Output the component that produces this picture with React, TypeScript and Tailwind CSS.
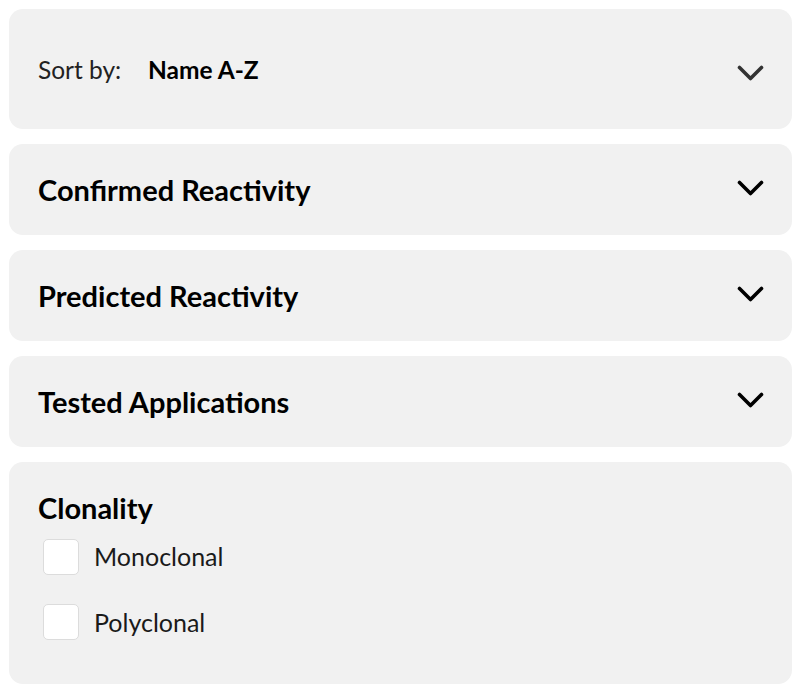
const font = { fontFamily: "Lato, 'Open Sans', sans-serif" };

function Chevron({ className }: { className: string }) {
  return (
    <svg width="27" height="17" viewBox="0 0 27 17" fill="none" className={className}>
      <polyline points="2.5,2.5 13.5,13.5 24.5,2.5" stroke="currentColor" strokeWidth="3.6" strokeLinecap="round" strokeLinejoin="round" />
    </svg>
  );
}

function Section({ title }: { title: string }) {
  return (
    <div className="h-[91px] rounded-[14px] bg-[#f1f1f1] pl-[29px] pr-[28px] flex items-center justify-between">
      <span className="text-[29px] font-bold text-black mt-[1px]">{title}</span>
      <Chevron className="text-black -mt-[3px]" />
    </div>
  );
}

function Check({ label }: { label: string }) {
  return (
    <label className="flex items-center gap-[15px]">
      <span className="w-[36px] h-[36px] rounded-[5px] bg-white border border-[#dcdcdc]" />
      <span className="text-[25px] text-[#1a1a1a]">{label}</span>
    </label>
  );
}

export default function App() {
  return (
    <div className="bg-white p-[9px] flex flex-col gap-[15px]" style={font}>
      {/* Sort */}
      <div className="h-[120px] rounded-[14px] bg-[#f1f1f1] pl-[29px] pr-[28px] flex items-center justify-between">
        <div className="flex items-center mt-[3px]">
          <span className="text-[24.5px] text-[#222] w-[110px]">Sort by:</span>
          <span className="text-[24.5px] font-bold text-black">Name A-Z</span>
        </div>
        <Chevron className="text-[#333] mt-[9px]" />
      </div>

      <Section title="Confirmed Reactivity" />
      <Section title="Predicted Reactivity" />
      <Section title="Tested Applications" />

      {/* Clonality */}
      <div className="rounded-[14px] bg-[#f1f1f1] pl-[29px] pt-[27px] pb-[43px]">
        <div className="text-[29px] font-bold text-black leading-[38px]">Clonality</div>
        <div className="mt-[11px] pl-[5px] flex flex-col gap-[28px]">
          <Check label="Monoclonal" />
          <Check label="Polyclonal" />
        </div>
      </div>
    </div>
  );
}
